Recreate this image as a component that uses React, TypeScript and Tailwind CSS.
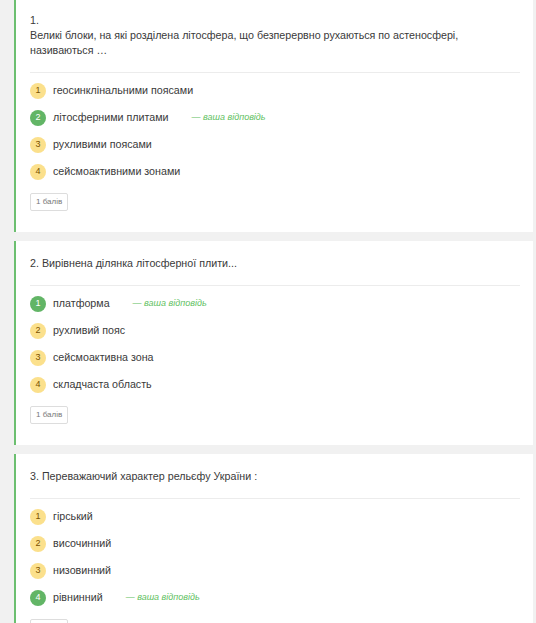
import React from "react";

type Opt = { text: string; correct?: boolean };
type Q = { title: React.ReactNode; options: Opt[] };

const questions: Q[] = [
  {
    title: (
      <>
        <div>1.</div>
        <div>
          Великі блоки, на які розділена літосфера, що безперервно рухаються по астеносфері, називаються …
        </div>
      </>
    ),
    options: [
      { text: "геосинклінальними поясами" },
      { text: "літосферними плитами", correct: true },
      { text: "рухливими поясами" },
      { text: "сейсмоактивними зонами" },
    ],
  },
  {
    title: <div>2. Вирівнена ділянка літосферної плити...</div>,
    options: [
      { text: "платформа", correct: true },
      { text: "рухливий пояс" },
      { text: "сейсмоактивна зона" },
      { text: "складчаста область" },
    ],
  },
  {
    title: <div>3. Переважаючий характер рельєфу України :</div>,
    options: [
      { text: "гірський" },
      { text: "височинний" },
      { text: "низовинний" },
      { text: "рівнинний", correct: true },
    ],
  },
];

function Card({ q, first }: { q: Q; first?: boolean }) {
  return (
    <div
      className={
        "bg-white border-l-2 border-[#6cbf70] pl-[14px] pr-[13px] pt-[15px] pb-[21px] " +
        (first ? "-mt-[2px]" : "")
      }
    >
      <div className="text-[10.7px] leading-[15px] text-[#3a3a3a]">{q.title}</div>
      <div className="mt-[14px] h-px bg-[#ececec]" />
      <div className="pt-[4px] flex flex-col">
        {q.options.map((o, i) => (
          <div key={i} className="h-[27px] flex items-center">
            <div
              className={
                "w-[16px] h-[16px] rounded-full flex items-center justify-center text-[9px] leading-none shrink-0 " +
                (o.correct ? "bg-[#62b566] text-white" : "bg-[#fbe08c] text-[#7a5000]")
              }
            >
              {i + 1}
            </div>
            <span className="ml-[7px] text-[10.7px] text-[#3a3a3a]">{o.text}</span>
            {o.correct && (
              <span className="ml-[23px] text-[9px] italic text-[#5fbf62]">— ваша відповідь</span>
            )}
          </div>
        ))}
      </div>
      <div className="mt-[8px] flex">
        <div className="h-[18px] px-[5px] border border-[#dddddd] rounded-[2px] text-[8px] text-[#777] flex items-center">
          1 балів
        </div>
      </div>
    </div>
  );
}

export default function App() {
  return (
    <div
      className="h-[623px] overflow-hidden bg-[#f1f1f1] pl-[14px] pr-[3px]"
      style={{ fontFamily: '"Liberation Sans", Arial, sans-serif' }}
    >
      <div className="flex flex-col gap-[9px]">
        {questions.map((q, i) => (
          <Card key={i} q={q} first={i === 0} />
        ))}
      </div>
    </div>
  );
}
